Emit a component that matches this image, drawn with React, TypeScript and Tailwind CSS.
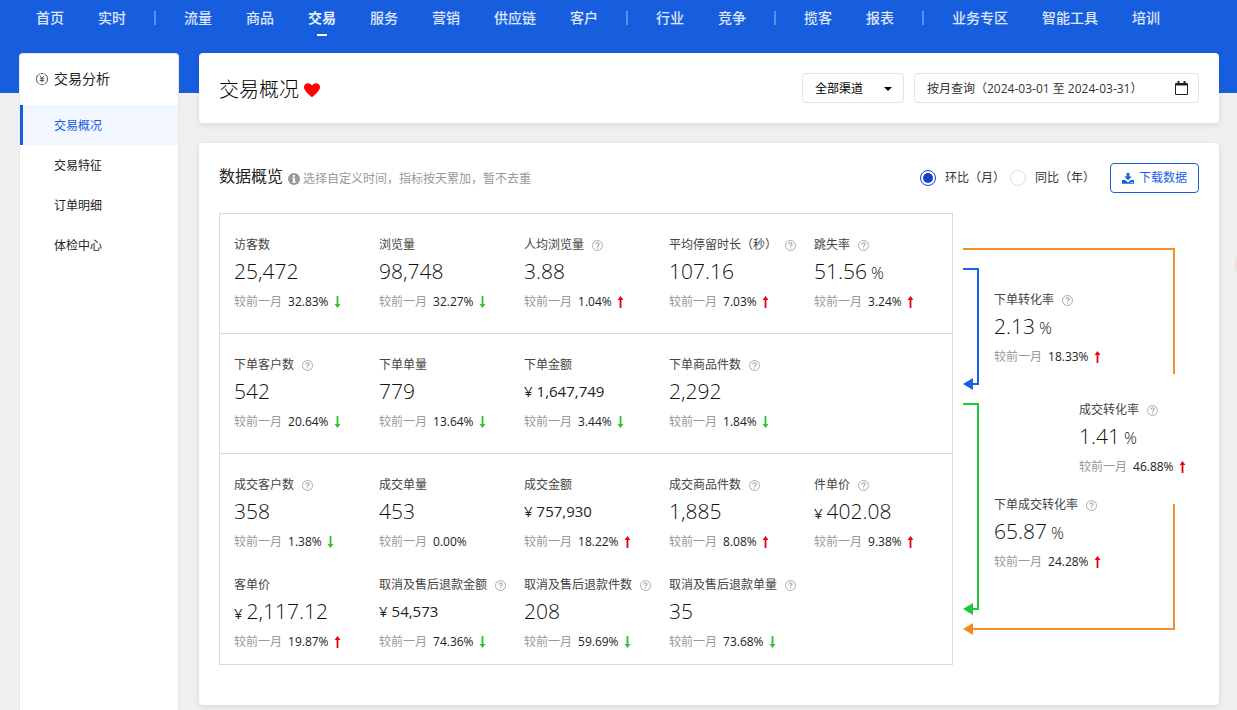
import { Fragment } from "react";

type Trend = "up" | "down" | "flat";

interface Metric {
  label: string;
  value: string;
  help?: boolean;
  prefix?: string;
  suffix?: string;
  small?: boolean;
  change: string;
  trend: Trend;
}

const navGroups: string[][] = [
  ["首页", "实时"],
  ["流量", "商品", "交易", "服务", "营销", "供应链", "客户"],
  ["行业", "竞争"],
  ["揽客", "报表"],
  ["业务专区", "智能工具", "培训"],
];

const sideItems = ["交易概况", "交易特征", "订单明细", "体检中心"];

const metricGroups: Metric[][] = [
  [
    { label: "访客数", value: "25,472", change: "32.83%", trend: "down" },
    { label: "浏览量", value: "98,748", change: "32.27%", trend: "down" },
    { label: "人均浏览量", value: "3.88", help: true, change: "1.04%", trend: "up" },
    { label: "平均停留时长（秒）", value: "107.16", help: true, change: "7.03%", trend: "up" },
    { label: "跳失率", value: "51.56", help: true, suffix: "%", change: "3.24%", trend: "up" },
  ],
  [
    { label: "下单客户数", value: "542", help: true, change: "20.64%", trend: "down" },
    { label: "下单单量", value: "779", change: "13.64%", trend: "down" },
    { label: "下单金额", value: "1,647,749", prefix: "¥", small: true, change: "3.44%", trend: "down" },
    { label: "下单商品件数", value: "2,292", help: true, change: "1.84%", trend: "down" },
  ],
  [
    { label: "成交客户数", value: "358", help: true, change: "1.38%", trend: "down" },
    { label: "成交单量", value: "453", change: "0.00%", trend: "flat" },
    { label: "成交金额", value: "757,930", prefix: "¥", small: true, change: "18.22%", trend: "up" },
    { label: "成交商品件数", value: "1,885", help: true, change: "8.08%", trend: "up" },
    { label: "件单价", value: "402.08", help: true, prefix: "¥", change: "9.38%", trend: "up" },
    { label: "客单价", value: "2,117.12", prefix: "¥", change: "19.87%", trend: "up" },
    { label: "取消及售后退款金额", value: "54,573", help: true, prefix: "¥", small: true, change: "74.36%", trend: "down" },
    { label: "取消及售后退款件数", value: "208", help: true, change: "59.69%", trend: "down" },
    { label: "取消及售后退款单量", value: "35", help: true, change: "73.68%", trend: "down" },
  ],
];

const orderRate: Metric = { label: "下单转化率", value: "2.13", help: true, suffix: "%", change: "18.33%", trend: "up" };
const dealRate: Metric = { label: "成交转化率", value: "1.41", help: true, suffix: "%", change: "46.88%", trend: "up" };
const orderDealRate: Metric = { label: "下单成交转化率", value: "65.87", help: true, suffix: "%", change: "24.28%", trend: "up" };

function HelpIcon() {
  return (
    <svg className="ml-2 size-[11px] shrink-0" viewBox="0 0 11 11" fill="none" stroke="#a3a3a3" aria-hidden="true">
      <circle cx="5.5" cy="5.5" r="5" strokeWidth="0.9" />
      <path d="M3.9 4.400c0-1 .7-1.600 1.600-1.600s1.600.6 1.600 1.400c0 1.100-1.500 1.100-1.500 2.300" strokeWidth="1.1" />
      <path d="M5.500 7.400v1.200" strokeWidth="1.2" />
    </svg>
  );
}

function TrendArrow({ trend }: { trend: Trend }) {
  if (trend === "flat") return null;
  return trend === "up" ? (
    <svg className="ml-[5px] h-3 w-[7px]" viewBox="0 0 7 12" fill="#e60012" aria-hidden="true">
      <path d="M3.500 0L6.400 4H4.400V12H2.600V4H.6z" />
    </svg>
  ) : (
    <svg className="ml-[5px] h-3 w-[7px]" viewBox="0 0 7 12" fill="#2fbf2f" aria-hidden="true">
      <path d="M3.500 12L6.400 8H4.400V0H2.600V8H.6z" />
    </svg>
  );
}

function MetricBlock({ metric }: { metric: Metric }) {
  return (
    <div className="whitespace-nowrap">
      <div className="flex items-center text-xs leading-5 text-[#444]">
        {metric.label}
        {metric.help && <HelpIcon />}
      </div>
      <div className="flex h-8 items-baseline gap-1 leading-8 text-[#222]">
        {metric.prefix && <span className="text-[15px]">{metric.prefix}</span>}
        <span className={metric.small ? "text-[15px]" : "text-[21px] font-light text-[#111]"}>{metric.value}</span>
        {metric.suffix && <span className="text-base font-light text-[#111]">{metric.suffix}</span>}
      </div>
      <div className="mt-[5px] flex items-center text-xs leading-5">
        <span className="text-[#999]">较前一月</span>
        <span className="ml-1.5 text-[#222]">{metric.change}</span>
        <TrendArrow trend={metric.trend} />
      </div>
    </div>
  );
}

function TopNav() {
  return (
    <nav className="flex h-[53px] items-start pt-[7px] pl-[19px] text-sm font-medium whitespace-nowrap">
      {navGroups.map((group, index) => (
        <Fragment key={group[0]}>
          {index > 0 && <span className="mx-[11px] mt-1 h-3.5 w-0.5 shrink-0 bg-white/30" />}
          {group.map((item) => {
            const active = item === "交易";
            return (
              <a
                key={item}
                href="#"
                className={
                  active
                    ? "flex flex-col items-center px-[17px] leading-[22px] font-bold text-white/90"
                    : "px-[17px] leading-[22px] text-white/85"
                }
              >
                {item}
                {active && <span className="mt-[5px] h-0.5 w-2.5 bg-white" />}
              </a>
            );
          })}
        </Fragment>
      ))}
    </nav>
  );
}

function Sidebar() {
  return (
    <aside className="w-40 shrink-0 rounded-t border border-b-0 border-[#e4e6ea] bg-white">
      <h2 className="flex h-[51px] items-center pb-0.5 pl-4 text-sm text-[#222]">
        <svg className="mr-1.5 size-3" viewBox="0 0 12 12" fill="none" stroke="#444" aria-hidden="true">
          <path d="M3.600.9a5.600 5.600 0 0 0 0 10.200M8.400.9a5.600 5.600 0 0 1 0 10.200M4.600.5h2.800M4.600 11.500h2.800" strokeWidth="0.9" />
          <path d="M3.900 2.800L6 5.400 8.100 2.800M6 5.400v4M3.800 5.700h4.400M3.800 7.500h4.400" strokeWidth="0.9" />
        </svg>
        交易分析
      </h2>
      <ul className="text-xs">
        {sideItems.map((item, index) => (
          <li key={item}>
            <a
              href="#"
              className={
                index === 0
                  ? "flex h-10 items-center border-l-[3px] border-[#175edf] bg-[#f2f6ff] pt-0.5 pl-[31px] text-[#175edf]"
                  : "flex h-10 items-center border-l-[3px] border-transparent pt-0.5 pl-[31px] text-[#222]"
              }
            >
              {item}
            </a>
          </li>
        ))}
      </ul>
    </aside>
  );
}

function TitleCard() {
  return (
    <header className="flex h-[70px] items-center rounded bg-white px-5 shadow-[0_2px_6px_rgba(0,0,0,0.1)]">
      <h1 className="flex items-center pt-1 text-xl font-light text-black">
        交易概况
        <svg className="ml-1 h-4 w-[18px]" viewBox="0 0 18 16" fill="#f00" aria-hidden="true">
          <path d="M9 15.200C8 14 1 9.300 1 5.200 1 2.800 2.800 1.200 5 1.200c1.700 0 3.200.9 4 2.400.8-1.500 2.300-2.400 4-2.400 2.200 0 4 1.600 4 4C17 9.300 10 14 9 15.200z" />
        </svg>
      </h1>
      <div className="relative ml-auto">
        <select
          aria-label="渠道"
          className="h-[30px] w-[102px] appearance-none rounded border border-[#e3e3e3] bg-white pt-0.5 pl-3 text-xs text-black"
        >
          <option>全部渠道</option>
        </select>
        <svg className="pointer-events-none absolute top-[14px] right-3 h-1 w-2" viewBox="0 0 8 4" aria-hidden="true">
          <path d="M0 0h8L4 4z" />
        </svg>
      </div>
      <button
        type="button"
        className="ml-2.5 flex h-[30px] w-[285px] items-center justify-between rounded border border-[#e3e3e3] bg-white pt-0.5 pr-2.5 pl-3 text-xs text-[#333]"
      >
        按月查询（2024-03-01 至 2024-03-31）
        <svg className="mb-0.5 h-3.5 w-[13px]" viewBox="0 0 13 14" fill="none" stroke="#222" aria-hidden="true">
          <path d="M.5 2.500h12v11H.5z" />
          <path d="M1 3.500h11" strokeWidth="2" />
          <path d="M3.500 0v4M9.500 0v4" strokeWidth="2" />
        </svg>
      </button>
    </header>
  );
}

function CompareRadio({ label, checked }: { label: string; checked?: boolean }) {
  return (
    <label className="mr-[5px] flex items-center gap-[9px] text-xs text-[#333]">
      <input
        type="radio"
        name="compare"
        defaultChecked={checked}
        className="size-4 appearance-none rounded-full border border-[#ddd] bg-white bg-clip-content p-0.5 checked:border-[#1740c8] checked:bg-[#1740c8]"
      />
      {label}
    </label>
  );
}

function Funnel() {
  return (
    <div className="relative w-[246px] shrink-0 pt-[77px] pl-[41px]">
      <svg className="absolute top-0 left-0 h-[452px] w-[246px]" viewBox="0 0 246 452" fill="none" strokeWidth="2" aria-hidden="true">
        <path d="M10 36H221V161M221 291V416H19" stroke="#f29127" />
        <path d="M10 56H25V171H19" stroke="#1b62e2" />
        <path d="M10 191H25V396H19" stroke="#20c739" />
        <path d="M10 171l10-6v12z" fill="#1b62e2" />
        <path d="M10 396l10-6v12z" fill="#20c739" />
        <path d="M10 416l10-6v12z" fill="#f28a1c" />
      </svg>
      <MetricBlock metric={orderRate} />
      <div className="mt-[33px] pl-[85px]">
        <MetricBlock metric={dealRate} />
      </div>
      <div className="mt-[18px]">
        <MetricBlock metric={orderDealRate} />
      </div>
    </div>
  );
}

function Overview() {
  return (
    <section className="rounded bg-white px-5 pt-5 pb-10 shadow-[0_2px_6px_rgba(0,0,0,0.1)]">
      <div className="flex h-[30px] items-center">
        <h2 className="pb-1 text-base text-[#222]">数据概览</h2>
        <p className="flex items-center pt-0.5 text-xs text-[#999]">
          <svg className="mr-[3px] ml-[5px] size-3" viewBox="0 0 12 12" fill="#999" aria-hidden="true">
            <circle cx="6" cy="6" r="6" />
            <path d="M5 2h2v1.800H5zM4.200 4.800H7v3.800h.8v1.200H4.200V8.600H5V6h-.8z" fill="#fff" />
          </svg>
          选择自定义时间，指标按天累加，暂不去重
        </p>
        <div className="ml-auto flex items-center">
          <CompareRadio label="环比（月）" checked />
          <CompareRadio label="同比（年）" />
          <button
            type="button"
            className="ml-2.5 flex h-[30px] items-center gap-[5px] rounded border border-[#175edf] px-[11px] text-xs text-[#175edf]"
          >
            <svg className="h-[11px] w-3" viewBox="0 0 12 11" fill="#175edf" aria-hidden="true">
              <path d="M4.600 0h2.800v3.500h2.400L6 7.300 2.200 3.500h2.400z" />
              <path d="M0 7h3.200L6 9.400 8.800 7H12v3.700H0zM8.500 9v.9h.9V9zM10.200 9v.9h.9V9z" fillRule="evenodd" />
            </svg>
            下载数据
          </button>
        </div>
      </div>
      <div className="mt-5 flex items-start">
        <div className="flex-1 divide-y divide-[#d9d9d9] border border-[#d9d9d9]">
          {metricGroups.map((group) => (
            <div
              key={group[0].label}
              className="grid grid-cols-[repeat(4,minmax(0,145fr))_minmax(0,138fr)] gap-y-[23px] pt-[21px] pb-[21px] pl-3.5 last:pb-3"
            >
              {group.map((metric) => (
                <MetricBlock key={metric.label} metric={metric} />
              ))}
            </div>
          ))}
        </div>
        <Funnel />
      </div>
    </section>
  );
}

export default function App() {
  return (
    <div className="flex min-h-screen flex-col overflow-x-clip bg-[#f0f0f0] bg-[linear-gradient(#175edf_93px,transparent_93px)] font-['Open_Sans','Noto_Sans_CJK_SC',sans-serif]">
      <TopNav />
      <div className="flex flex-1 gap-5 pr-[18px] pl-[19px]">
        <Sidebar />
        <main className="flex min-w-0 flex-1 flex-col gap-5 pb-[5px]">
          <TitleCard />
          <Overview />
        </main>
      </div>
      <div className="fixed top-[252px] -right-6 size-6 rounded-full shadow-[0_0_4px_rgba(255,60,60,0.3)]" />
    </div>
  );
}
